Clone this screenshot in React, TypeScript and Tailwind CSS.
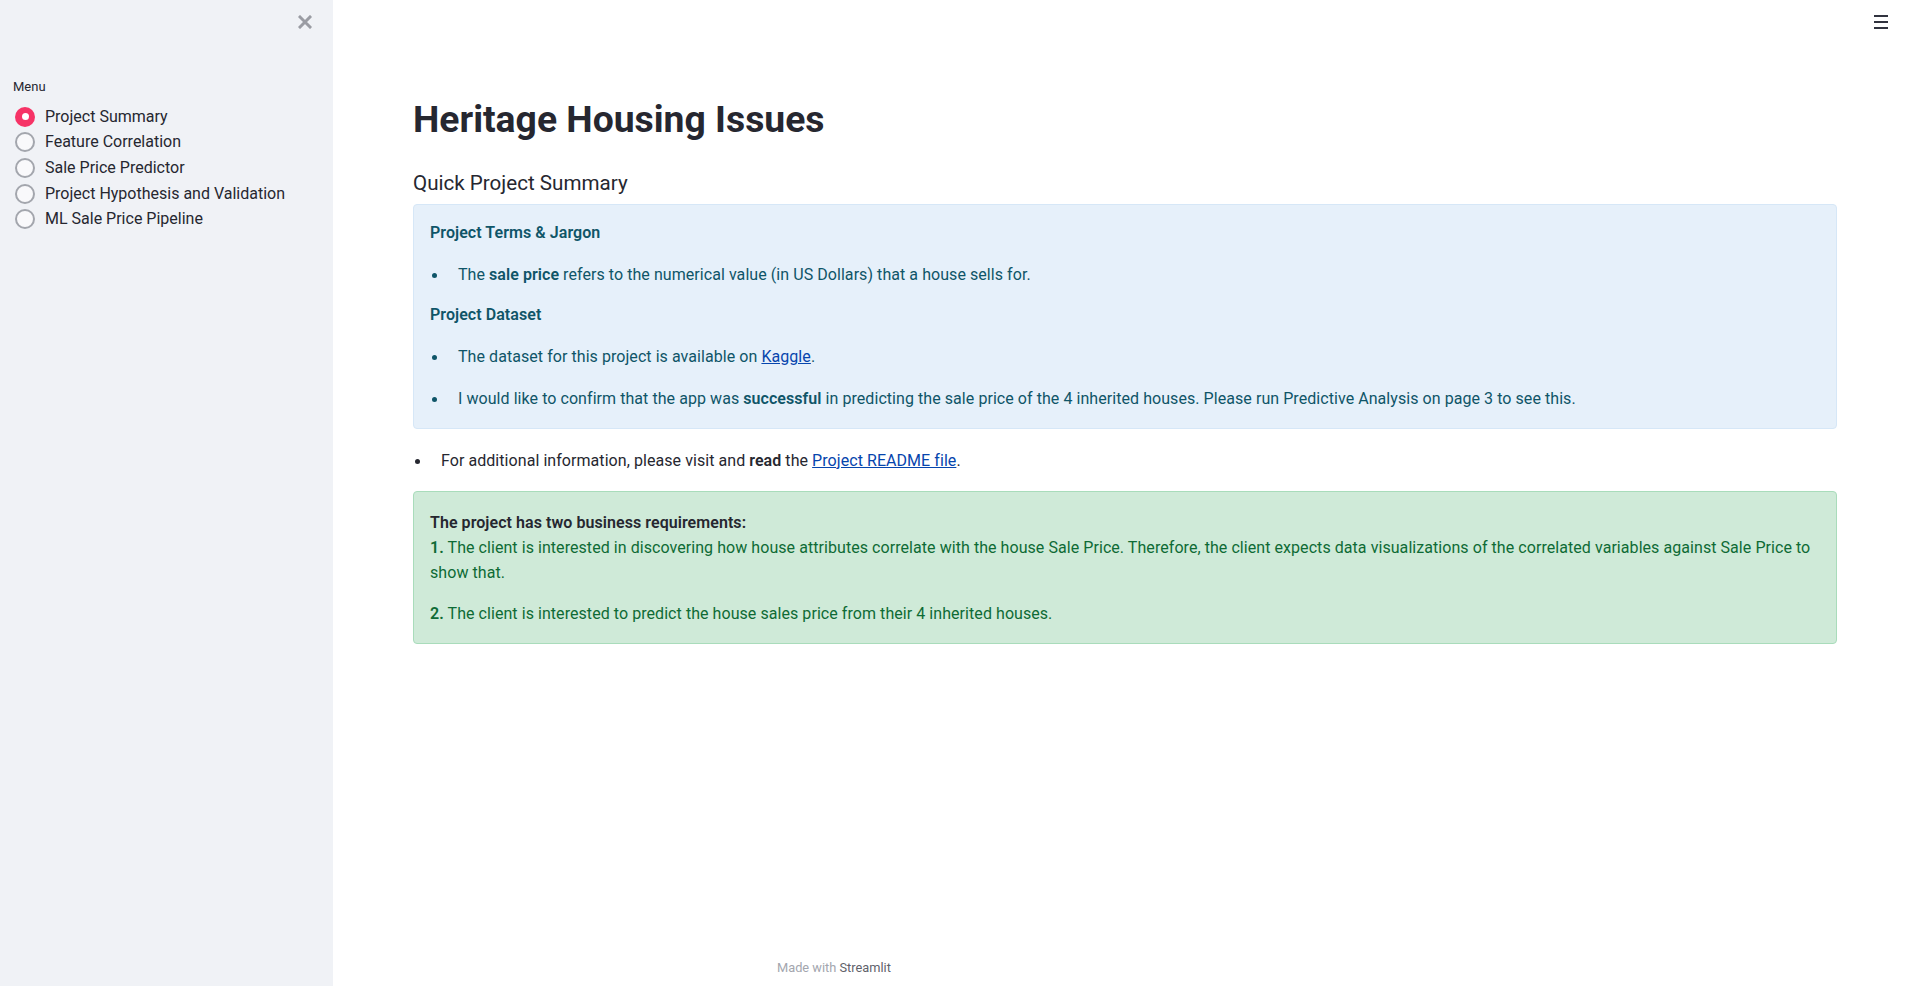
import { useState } from "react";

const menuItems = [
  "Project Summary",
  "Feature Correlation",
  "Sale Price Predictor",
  "Project Hypothesis and Validation",
  "ML Sale Price Pipeline",
];

function Radio({ checked }: { checked: boolean }) {
  if (checked) {
    return (
      <span className="flex h-[20px] w-[20px] shrink-0 items-center justify-center rounded-full bg-[#f63366]">
        <span className="h-[7px] w-[7px] rounded-full bg-white" />
      </span>
    );
  }
  return (
    <span className="h-[20px] w-[20px] shrink-0 rounded-full border-2 border-[#a3a6ad] bg-[#f9f9fb]" />
  );
}

function Bullet({ children, dot = "bg-[#0f5568]" }: { children: React.ReactNode; dot?: string }) {
  return (
    <div className="flex items-start">
      <span className="flex h-[26px] w-[28px] shrink-0 items-center">
        <span className={`ml-[2px] h-[5px] w-[5px] rounded-full ${dot}`} />
      </span>
      <div>{children}</div>
    </div>
  );
}

export default function App() {
  const [page, setPage] = useState(0);

  return (
    <div className="flex min-h-screen w-full font-['Roboto',sans-serif] text-[16px] text-[#262730]">
      {/* sidebar */}
      <aside className="w-[333px] shrink-0 bg-[#f0f2f6]">
        <div className="flex justify-end pr-[21px] pt-[15px]">
          <svg width="14" height="14" viewBox="0 0 14 14" className="text-[#9a9ca3]">
            <path d="M2 2 L12 12 M12 2 L2 12" stroke="currentColor" strokeWidth="3" strokeLinecap="square" />
          </svg>
        </div>

        <div className="px-[13px] pt-[49px]">
          <div className="text-[13px] leading-[18px] text-[#262730]">Menu</div>
          <div className="mt-[8px] flex flex-col">
            {menuItems.map((item, i) => (
              <button
                key={item}
                onClick={() => setPage(i)}
                className="flex h-[25.6px] items-center gap-[10px] pl-[2px] text-left text-[16px] text-[#262730]"
              >
                <Radio checked={page === i} />
                <span>{item}</span>
              </button>
            ))}
          </div>
        </div>
      </aside>

      {/* main */}
      <main className="flex min-h-screen flex-1 flex-col bg-white">
        <div className="flex justify-end pr-[29px] pt-[15px]">
          <div className="flex h-[14px] w-[14px] flex-col justify-between">
            <span className="h-[2px] w-full bg-[#31333f]" />
            <span className="h-[2px] w-full bg-[#31333f]" />
            <span className="h-[2px] w-full bg-[#31333f]" />
          </div>
        </div>

        <div className="px-[80px] pt-[65px] tracking-[0.06px]">
          <h1 className="text-[37.3px] font-bold leading-[50px] tracking-normal text-[#262730]">Heritage Housing Issues</h1>

          <h3 className="mt-[25px] text-[20.6px] leading-[28px] tracking-normal text-[#262730]">Quick Project Summary</h3>

          <div className="mt-[7px] rounded-[4px] border border-[#d6e7f7] bg-[#e6f0fa] px-4 pb-4 pt-[15px] leading-[26px] text-[#0f5568]">
            <div className="font-semibold">Project Terms &amp; Jargon</div>
            <div className="mt-4">
              <Bullet>
                The <b className="font-semibold">sale price</b> refers to the numerical value (in US Dollars) that a house sells for.
              </Bullet>
            </div>
            <div className="mt-[14px] font-semibold">Project Dataset</div>
            <div className="mt-4 flex flex-col gap-4">
              <Bullet>
                The dataset for this project is available on{" "}
                <a href="#" className="text-[#0645ad] underline">Kaggle</a>.
              </Bullet>
              <Bullet>
                I would like to confirm that the app was <b className="font-semibold">successful</b> in predicting the sale price of the 4 inherited houses. Please run Predictive Analysis on page 3 to see this.
              </Bullet>
            </div>
          </div>

          <div className="mt-[19px] leading-[26px]">
            <Bullet dot="bg-[#262730]">
              For additional information, please visit and <b className="font-semibold">read</b> the{" "}
              <a href="#" className="text-[#0645ad] underline">Project README file</a>.
            </Bullet>
          </div>

          <div className="mt-[17px] rounded-[4px] border border-[#a9dcbb] bg-[#cfead8] px-4 pb-[17px] pt-[18px] leading-[25px] text-[#0e6b35]">
            <div className="font-semibold text-[#262730]">The project has two business requirements:</div>
            <div>
              <b className="font-semibold">1.</b> The client is interested in discovering how house attributes correlate with the house Sale Price. Therefore, the client expects data visualizations of the correlated variables against Sale Price to show that.
            </div>
            <div className="mt-4">
              <b className="font-semibold">2.</b> The client is interested to predict the house sales price from their 4 inherited houses.
            </div>
          </div>
        </div>

        <footer className="mt-auto pb-[10px] pl-[444px] text-[12.8px] leading-[16px]">
          <span className="text-[#a3a6ae]">Made with </span>
          <span className="text-[#5f626b]">Streamlit</span>
        </footer>
      </main>
    </div>
  );
}
